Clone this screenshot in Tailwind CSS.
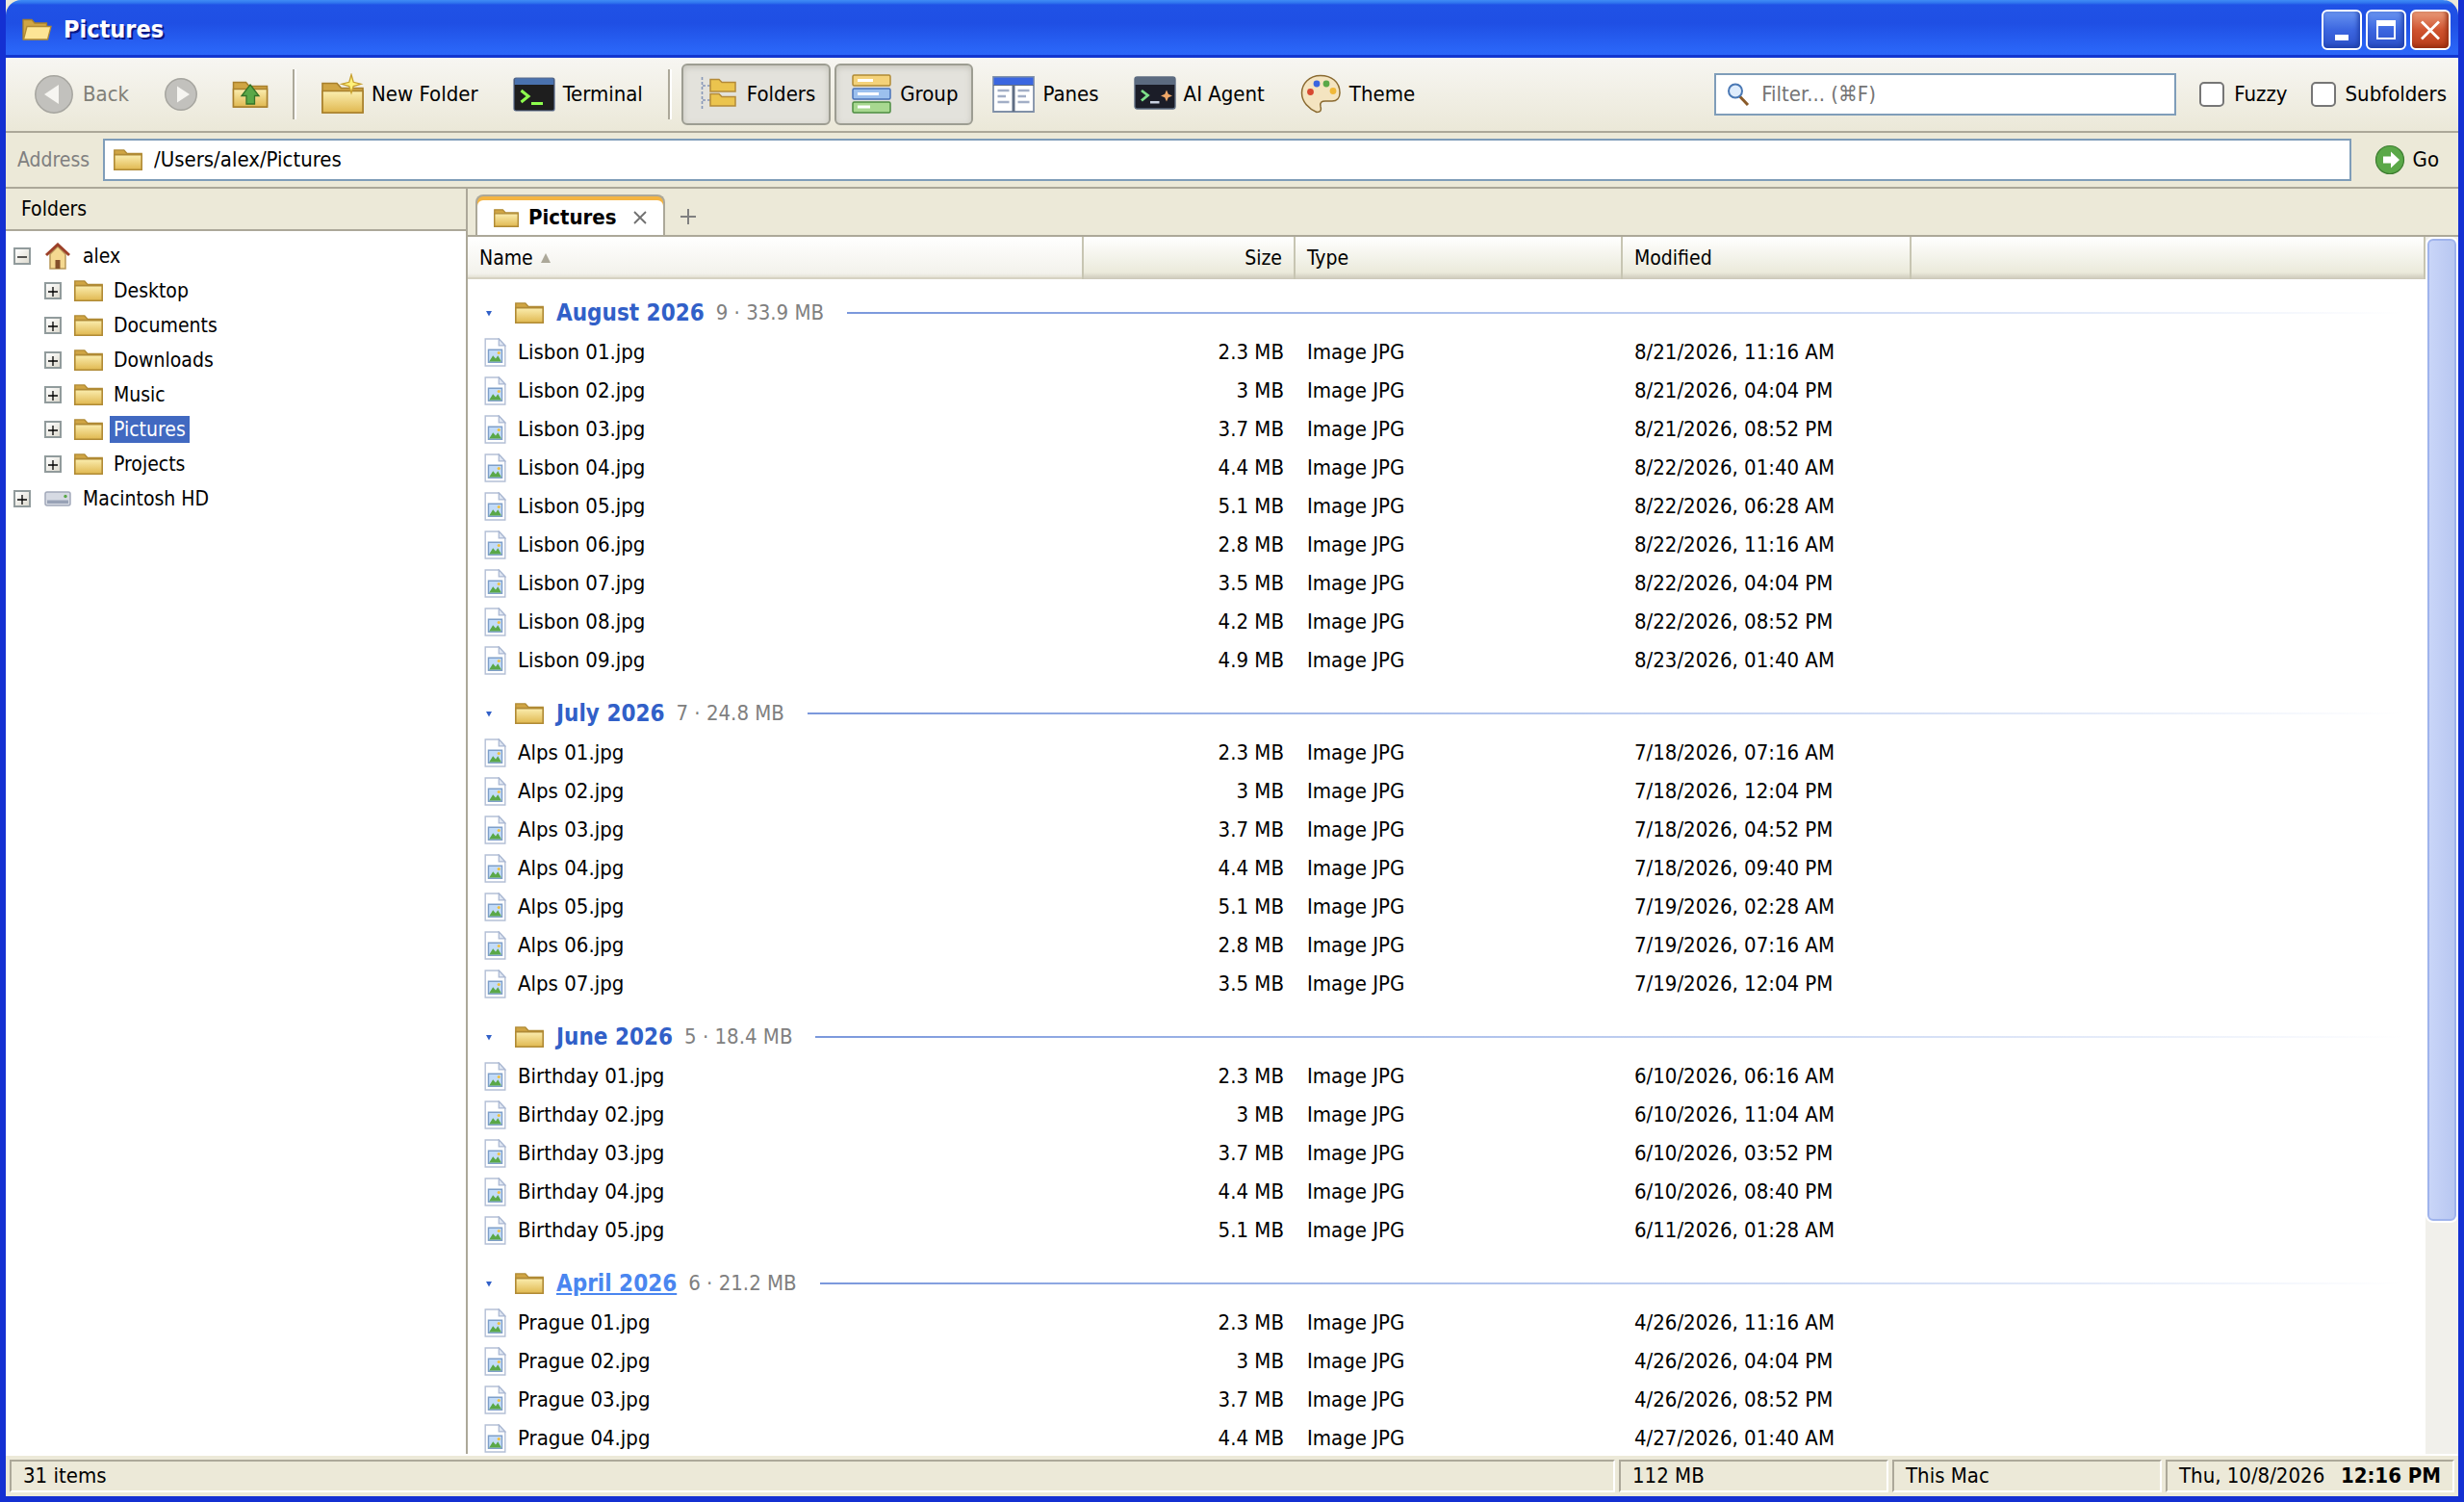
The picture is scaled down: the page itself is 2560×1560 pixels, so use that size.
<!DOCTYPE html>
<html lang="en">

<head>
    <meta charset="UTF-8">
    <meta name="viewport" content="width=device-width, initial-scale=1.0">
    <title>Pictures</title>
    <script src="https://cdn.jsdelivr.net/npm/@tailwindcss/browser@4"></script>
</head>

<body class="h-screen overflow-hidden font-['DejaVu_Sans_Condensed','DejaVu_Sans',sans-serif] text-[22px] leading-7 text-black">
    <!-- Shared icons -->
    <svg class="absolute size-0">
        <defs>
            <linearGradient id="folder-fill" x1="0" y1="0" x2="0" y2="1">
                <stop offset="0" stop-color="#fbeeb0" />
                <stop offset="1" stop-color="#e0b850" />
            </linearGradient>
            <symbol id="folder" viewBox="0 0 30 22">
                <path d="M.8 21V.9h10l3.2 3.6h15.2V21z" fill="#d0a544" stroke="#b08a35" stroke-width="1.4" />
                <path d="M.8 5.6h28.4V21.2H.8z" fill="url(#folder-fill)" stroke="#b08a35" stroke-width="1.6" />
            </symbol>
            <symbol id="image-file" viewBox="0 0 24 32">
                <path d="M1 1h15l7 7.500V31H1z" fill="#fff" stroke="#b4c0d6" stroke-width="1.5" />
                <path d="M16 1v7.500h7z" fill="#dfe6f2" stroke="#a9b7d2" stroke-width="1.300" />
                <path d="M4.500 13h15v14h-15z" fill="#c3dcf8" stroke="#7f9fc9" stroke-width="1.500" />
                <circle cx="16" cy="16.500" r="1.700" fill="#f0c040" />
                <path d="M5.300 26l4.200-6.500 3 3.500 2.500-3.500 3.800 6.500z" fill="#5aa848" />
            </symbol>
        </defs>
    </svg>

    <div class="flex h-full flex-col border-x-6 border-b-6 border-[#1430d2] bg-[#ece9d8]">
        <!-- Title bar -->
        <header class="flex h-[60px] shrink-0 items-center gap-3 rounded-t-[16px] border-b-3 border-[#1236cf] bg-[linear-gradient(to_bottom,#3f8cf5_0px,#2f74ee_3px,#2052e6_5px,#1f4fe4_24px,#2a65f7_52px,#2b66f8_100%)] pt-1 pr-2 pl-4">
            <svg class="h-6 w-8" viewBox="0 0 32 24">
                <path d="M2 21.500V1.500h9l3 3.500h12.500v16.500z" fill="#d0a544" stroke="#a8802c" stroke-width="1.300" />
                <path d="M2.500 22L6 8.500h25L27.500 22z" fill="#fde595" stroke="#b08a35" stroke-width="1.300" />
            </svg>
            <h1 class="flex-1 text-[25px] font-bold text-white [text-shadow:2px_2px_0_#0a1883]">Pictures</h1>
            <div class="flex gap-1">
                <button aria-label="Minimize" class="size-[42px] rounded-md border-2 border-white bg-linear-to-b from-[#6a94f0] via-[#3c66e0] to-[#2c50c8] p-0 shadow-[inset_-2px_-2px_5px_#1f3fa8]">
                    <svg viewBox="0 0 38 38"><path d="M12 24h14v6H12z" fill="#fff" /></svg>
                </button>
                <button aria-label="Maximize" class="size-[42px] rounded-md border-2 border-white bg-linear-to-b from-[#6a94f0] via-[#3c66e0] to-[#2c50c8] p-0 shadow-[inset_-2px_-2px_5px_#1f3fa8]">
                    <svg viewBox="0 0 38 38"><path d="M9 9h20v20H9zM11 15v12h16V15z" fill="#fff" fill-rule="evenodd" /></svg>
                </button>
                <button aria-label="Close" class="size-[42px] rounded-md border-2 border-white bg-linear-to-b from-[#e89a78] via-[#d05430] to-[#b83c18] p-0 shadow-[inset_-2px_-2px_5px_#902c10]">
                    <svg viewBox="0 0 38 38"><path d="M10 10.500l18 18M28 10.500l-18 18" stroke="#fff" stroke-width="2.800" /></svg>
                </button>
            </div>
        </header>

        <!-- Toolbar -->
        <div class="flex h-[78px] shrink-0 items-center gap-1 border-b-2 border-[#aca899] bg-linear-to-b from-[#f7f6f2] to-[#ebe8d8] px-3">
            <button disabled class="flex h-16 items-center gap-2 px-4 text-[#808078]">
                <svg class="size-11" viewBox="0 0 44 44">
                    <circle cx="22" cy="22" r="19.200" fill="#c2c1bd" stroke="#a6a59f" stroke-width="1.500" />
                    <path d="M27 12v20L12 22z" fill="#f6f5f1" />
                </svg>
                Back
            </button>
            <button disabled aria-label="Forward" class="flex h-16 w-17 items-center justify-center">
                <svg class="size-9" viewBox="0 0 36 36">
                    <circle cx="18" cy="18" r="16.200" fill="#c2c1bd" stroke="#a6a59f" stroke-width="1.500" />
                    <path d="M14 9.500v17L27 18z" fill="#f6f5f1" />
                </svg>
            </button>
            <button aria-label="Up" class="flex h-16 w-17 items-center justify-center">
                <svg class="h-7 w-[38px]" viewBox="0 0 38 28">
                    <path d="M1.500 27V1.500h13l3.500 4h18.500V27z" fill="#d0a544" stroke="#a8802c" stroke-width="1.500" />
                    <path d="M1.500 8.500h35V27h-35z" fill="url(#folder-fill)" stroke="#a8802c" stroke-width="1.500" />
                    <path d="M19 4l9 11.500h-4.500V24h-8.500v-8.500h-5z" fill="#5aa848" stroke="#347328" stroke-width="1.300" />
                </svg>
            </button>
            <div class="mx-1.5 h-[52px] w-1 border-r-2 border-l-2 border-r-white border-l-[#aca899]"></div>
            <button class="flex h-16 items-center gap-2 px-4">
                <svg class="size-11" viewBox="0 0 44 44">
                    <path d="M1 41V10.500h15l4.500 5H43V41z" fill="#d0a544" stroke="#a8802c" stroke-width="1.600" />
                    <path d="M1 18.500h42V41H1z" fill="url(#folder-fill)" stroke="#a8802c" stroke-width="1.600" />
                    <path d="M31 1.500l2.200 7.800 7.800 2-7.800 2.200L31 20.500l-2.200-7-7.800-2.200 7.800-2z" fill="#fff27a" stroke="#c8a030" stroke-width="1.300" />
                </svg>
                New Folder
            </button>
            <button class="flex h-16 items-center gap-2 px-4">
                <svg class="size-11" viewBox="0 0 44 44">
                    <rect x="1" y="5" width="42" height="34" rx="2" fill="#1e1e1e" />
                    <path d="M1.500 12V7q0-2 2-2h37q2 0 2 2v5z" fill="#4a72ae" />
                    <rect x="1" y="5" width="42" height="34" rx="2" fill="none" stroke="#56688a" stroke-width="1.200" />
                    <path d="M8.500 18l7.500 6-7.500 6" fill="none" stroke="#8eff4e" stroke-width="3" />
                    <path d="M19 30h12v3H19z" fill="#8eff4e" />
                </svg>
                Terminal
            </button>
            <div class="mx-1.5 h-[52px] w-1 border-r-2 border-l-2 border-r-white border-l-[#aca899]"></div>
            <button aria-pressed="true" class="flex h-16 items-center gap-2 rounded-md border-2 border-[#9d9d92] bg-[#e3e2dc] px-[14px] shadow-[inset_0_2px_6px_#c4c3ba]">
                <svg class="size-11" viewBox="0 0 44 44">
                    <path d="M5.500 4v33M6 13h8M6 28h8" fill="none" stroke="#8797b8" stroke-width="1.600" stroke-dasharray="3 2" />
                    <path d="M14 19V6.500h9l3 3h14V19zM14 34V21.500h9l3 3h14V34z" fill="#ebc44e" stroke="#b48a38" stroke-width="1.500" />
                </svg>
                Folders
            </button>
            <button aria-pressed="true" class="flex h-16 items-center gap-2 rounded-md border-2 border-[#9d9d92] bg-[#e3e2dc] px-[14px] shadow-[inset_0_2px_6px_#c4c3ba]">
                <svg class="size-11" viewBox="0 0 44 44">
                    <rect x="3" y="2" width="39" height="11" rx="1.500" fill="#f4d27a" stroke="#b08a35" stroke-width="1.500" />
                    <rect x="3" y="16" width="39" height="11" rx="1.500" fill="#9cc0ee" stroke="#4872b8" stroke-width="1.500" />
                    <rect x="3" y="30" width="39" height="11" rx="1.500" fill="#a8d890" stroke="#4c8c40" stroke-width="1.500" />
                    <path d="M8 6h16v3H8zM8 20h22v3H8zM8 33.500h13v3H8z" fill="#fff" />
                </svg>
                Group
            </button>
            <button class="flex h-16 items-center gap-2 px-4">
                <svg class="size-11" viewBox="0 0 44 44">
                    <path d="M1 4h42v36H1z" fill="#fff" stroke="#8090a8" stroke-width="1.800" />
                    <path d="M1.500 4.500h41V12h-41z" fill="#3a66e0" />
                    <path d="M22 12v28" stroke="#606e84" stroke-width="3" />
                    <path d="M1 12.500h42" stroke="#606e84" />
                    <path d="M5.500 18h12M5.500 24h8.500M5.500 30h12M26.500 18h12M26.500 24h8.500M26.500 30h12" stroke="#a2aec6" stroke-width="2.500" />
                </svg>
                Panes
            </button>
            <button class="flex h-16 items-center gap-2 px-4">
                <svg class="size-11" viewBox="0 0 44 44">
                    <rect x="1" y="4" width="42" height="33" rx="2.500" fill="#1b1d28" />
                    <path d="M1 12V6.500Q1 4 3.500 4h37Q43 4 43 6.500V12z" fill="#5c6b80" />
                    <rect x="1" y="4" width="42" height="33" rx="2.500" fill="none" stroke="#5c6b80" stroke-width="1.400" />
                    <path d="M8 18l6.500 5L8 28.500" fill="none" stroke="#7ee08a" stroke-width="2.800" />
                    <path d="M17 29h9.500v2.500H17z" fill="#c8d0e0" />
                    <path d="M34 17.500l1.800 4.200 4.200 1.800-4.200 1.800L34 29.500l-1.800-4.200L28 23.500l4.200-1.800z" fill="#f0a868" />
                </svg>
                AI Agent
            </button>
            <button class="flex h-16 items-center gap-2 px-4">
                <svg class="size-11" viewBox="0 0 44 44">
                    <path d="M22 2.500C10 2.500 2.500 11 2.500 20.500S10 37 18 40.500c4.500 0 5-2.500 4-6-1-4 1-5.500 5-5.500h7c5 0 8-3.500 8-8.500C42 8.500 33 2.500 22 2.500z" fill="#f4e4c0" stroke="#8a6a30" stroke-width="1.500" />
                    <circle cx="18" cy="11" r="3.400" fill="#3a66e0" />
                    <circle cx="28" cy="11" r="3.400" fill="#5aa848" />
                    <circle cx="11.500" cy="19.500" r="3.400" fill="#d84830" />
                    <circle cx="35" cy="18.500" r="3.400" fill="#f0b838" />
                </svg>
                Theme
            </button>

            <div class="ml-auto flex items-center">
                <label class="mr-6 flex h-11 w-[480px] items-center gap-3 border-2 border-[#7f9db9] bg-white pr-2 pl-[11px]">
                    <svg class="size-6 shrink-0" viewBox="0 0 24 24">
                        <path d="M13 13.500l9 9.500" stroke="#8a5a28" stroke-width="3" />
                        <circle cx="9" cy="8.500" r="7" fill="#deecfc" stroke="#4a78b4" stroke-width="2" />
                    </svg>
                    <input type="text" aria-label="Filter" placeholder="Filter... (⌘F)" class="min-w-0 flex-1 outline-none placeholder:text-[#757575]">
                </label>
                <input id="fuzzy" type="checkbox" class="size-[26px] appearance-none rounded-[5px] border-2 border-[#767676] bg-white">
                <label for="fuzzy" class="mr-6 ml-[10px]">Fuzzy</label>
                <input id="subfolders" type="checkbox" class="size-[26px] appearance-none rounded-[5px] border-2 border-[#767676] bg-white">
                <label for="subfolders" class="ml-[10px]">Subfolders</label>
            </div>
        </div>

        <!-- Address bar -->
        <div class="flex h-[58px] shrink-0 items-center border-b-2 border-[#aca899] pr-5 pl-3">
            <label for="address" class="w-[89px] text-[21px] text-[#808080]">Address</label>
            <div class="flex h-11 flex-1 items-center gap-3 border-2 border-[#7f9db9] bg-white px-[9px]">
                <svg class="h-[22px] w-[30px]"><use href="#folder" /></svg>
                <input id="address" type="text" value="/Users/alex/Pictures" class="min-w-0 flex-1 outline-none">
            </div>
            <button class="ml-6 flex items-center gap-2">
                <svg class="size-8" viewBox="0 0 32 32">
                    <circle cx="16" cy="16" r="14.500" fill="#5aa848" stroke="#3c7c30" stroke-width="1.200" />
                    <path d="M9 12.500h8V7.500l9 8.500-9 8.500v-5H9z" fill="#fff" />
                </svg>
                Go
            </button>
        </div>

        <!-- Main area -->
        <main class="flex min-h-0 flex-1 border-b-2 border-white">
            <aside class="flex w-[480px] shrink-0 flex-col border-r-2 border-[#aca899] bg-white text-[21px]">
                <h2 class="flex h-11 items-center border-b-2 border-[#aca899] bg-[#ece9d8] px-4">Folders</h2>
                <ul id="folder-tree" class="py-2">
                    <!-- Tree rows are injected here -->
                </ul>
            </aside>

            <section class="flex min-w-0 flex-1 flex-col">
                <!-- Tabs -->
                <div class="flex h-[50px] shrink-0 items-end border-b-2 border-[#aca899] px-2">
                    <div class="h-[42px] overflow-hidden rounded-t-lg border-2 border-b-0 border-[#aca899] bg-[#f4b441] pt-1">
                        <div class="flex h-full items-center rounded-t-md bg-white pr-4 pl-[17px]">
                            <svg class="h-[19px] w-[26px]"><use href="#folder" /></svg>
                            <button class="ml-[10px] font-bold">Pictures</button>
                            <button aria-label="Close tab" class="ml-4">
                                <svg class="size-4" viewBox="0 0 16 16"><path d="M2 2l12 12M14 2L2 14" stroke="#707070" stroke-width="1.800" /></svg>
                            </button>
                        </div>
                    </div>
                    <button aria-label="New tab" class="mb-[11px] ml-4">
                        <svg class="size-4" viewBox="0 0 16 16"><path d="M0 8h16M8 0v16" stroke="#808080" stroke-width="2" /></svg>
                    </button>
                </div>

                <div class="flex min-h-0 flex-1 bg-white">
                    <div class="min-w-0 flex-1 overflow-hidden">
                        <table class="w-full table-fixed border-separate border-spacing-0">
                            <colgroup>
                                <col class="w-[640px]">
                                <col class="w-[220px]">
                                <col class="w-[340px]">
                                <col class="w-[300px]">
                                <col>
                            </colgroup>
                            <thead>
                                <tr class="h-11 text-left text-[21px]">
                                    <th class="border-r-2 border-[#c7c5b2] bg-[linear-gradient(to_bottom,#ffffff,#f3f2ec_38px,#e4e1d4_42px,#d6d2c2_42px,#d6d2c2)] px-3 font-normal">
                                        <span class="flex items-center gap-2">Name
                                            <svg class="size-[10px]" viewBox="0 0 10 10"><path d="M5 0l5 10H0z" fill="#aca899" /></svg>
                                        </span>
                                    </th>
                                    <th class="border-r-2 border-[#c7c5b2] bg-[linear-gradient(to_bottom,#ffffff,#ebeadb_37px,#cbc7b8)] px-3 text-right font-normal">Size</th>
                                    <th class="border-r-2 border-[#c7c5b2] bg-[linear-gradient(to_bottom,#ffffff,#ebeadb_37px,#cbc7b8)] px-3 font-normal">Type</th>
                                    <th class="border-r-2 border-[#c7c5b2] bg-[linear-gradient(to_bottom,#ffffff,#ebeadb_37px,#cbc7b8)] px-3 font-normal">Modified</th>
                                    <td class="border-r-2 border-[#c7c5b2] bg-[linear-gradient(to_bottom,#ffffff,#ebeadb_37px,#cbc7b8)]"></td>
                                </tr>
                            </thead>
                            <tbody id="file-rows">
                                <!-- Groups and files are injected here -->
                            </tbody>
                        </table>
                    </div>

                    <!-- Scrollbar -->
                    <div class="w-[34px] bg-[#f1f0eb]">
                        <div class="h-[81%] rounded-lg border-2 border-white bg-white">
                            <div class="h-full rounded-md border-2 border-[#9fb3ec] bg-linear-to-r from-[#c9d5f8] to-[#b8c7f1]"></div>
                        </div>
                    </div>
                </div>
            </section>
        </main>

        <!-- Status bar -->
        <footer class="flex h-[42px] shrink-0 gap-1 p-1">
            <div class="flex flex-1 items-center border-2 border-t-[#aca899] border-r-white border-b-white border-l-[#aca899] px-3">31 items</div>
            <div class="flex w-[280px] items-center border-2 border-t-[#aca899] border-r-white border-b-white border-l-[#aca899] px-3">112 MB</div>
            <div class="flex w-[280px] items-center border-2 border-t-[#aca899] border-r-white border-b-white border-l-[#aca899] px-3">This Mac</div>
            <div class="flex w-[300px] items-center justify-between border-2 border-t-[#aca899] border-r-white border-b-white border-l-[#aca899] px-3">
                <span>Thu, 10/8/2026</span>
                <span class="font-bold">12:16 PM</span>
            </div>
        </footer>
    </div>

    <script>
        const folderIcon = `<svg class="h-[22px] w-[30px]"><use href="#folder" /></svg>`;
        const homeIcon = `
            <svg class="size-7" viewBox="0 0 28 28">
                <path d="M6 12l8-8 8 8v15H6z" fill="#f4d890" stroke="#b89858" stroke-width="1.500" />
                <path d="M11.500 18h5v9h-5z" fill="#84502a" />
                <path d="M2 13L14 2l12 11" fill="none" stroke="#9c4028" stroke-width="3" />
            </svg>`;
        const driveIcon = `
            <svg class="h-4 w-7" viewBox="0 0 28 16">
                <rect x="1" y="1" width="26" height="14" rx="2" fill="#d6dae3" stroke="#a2a9ba" stroke-width="1.500" />
                <path d="M3 9.500h22v3.500H3z" fill="#98a2b6" />
                <circle cx="22" cy="5.500" r="1.700" fill="#5aa848" />
            </svg>`;

        const tree = [
            { name: "alex", icon: homeIcon, open: true },
            { name: "Desktop", child: true },
            { name: "Documents", child: true },
            { name: "Downloads", child: true },
            { name: "Music", child: true },
            { name: "Pictures", child: true, selected: true },
            { name: "Projects", child: true },
            { name: "Macintosh HD", icon: driveIcon }
        ];

        document.getElementById("folder-tree").innerHTML = tree.map(item => `
            <li class="flex h-9 items-center ${item.child ? "pl-10" : "pl-2"}">
                <button aria-label="Toggle ${item.name}" class="size-[18px] border-2 border-[#919b9c] bg-linear-to-br from-white to-[#dedbd0]">
                    <svg viewBox="0 0 14 14"><path d="${item.open ? "M2 8h10" : "M2 8h10M7 3v10"}" stroke="#000" stroke-width="1.300" /></svg>
                </button>
                <span class="ml-3 flex w-8 justify-center">${item.icon || folderIcon}</span>
                <a href="#" class="ml-1.5 px-1 ${item.selected ? "bg-[#4169c1] text-white" : ""}">${item.name}</a>
            </li>`).join("");

        const sizes = ["2.3 MB", "3 MB", "3.7 MB", "4.4 MB", "5.1 MB", "2.8 MB", "3.5 MB", "4.2 MB", "4.9 MB"];
        const groups = [
            {
                title: "August 2026", info: "9 · 33.9 MB", prefix: "Lisbon",
                dates: ["8/21/2026, 11:16 AM", "8/21/2026, 04:04 PM", "8/21/2026, 08:52 PM", "8/22/2026, 01:40 AM", "8/22/2026, 06:28 AM", "8/22/2026, 11:16 AM", "8/22/2026, 04:04 PM", "8/22/2026, 08:52 PM", "8/23/2026, 01:40 AM"]
            },
            {
                title: "July 2026", info: "7 · 24.8 MB", prefix: "Alps",
                dates: ["7/18/2026, 07:16 AM", "7/18/2026, 12:04 PM", "7/18/2026, 04:52 PM", "7/18/2026, 09:40 PM", "7/19/2026, 02:28 AM", "7/19/2026, 07:16 AM", "7/19/2026, 12:04 PM"]
            },
            {
                title: "June 2026", info: "5 · 18.4 MB", prefix: "Birthday",
                dates: ["6/10/2026, 06:16 AM", "6/10/2026, 11:04 AM", "6/10/2026, 03:52 PM", "6/10/2026, 08:40 PM", "6/11/2026, 01:28 AM"]
            },
            {
                title: "April 2026", info: "6 · 21.2 MB", prefix: "Prague", hover: true,
                dates: ["4/26/2026, 11:16 AM", "4/26/2026, 04:04 PM", "4/26/2026, 08:52 PM", "4/27/2026, 01:40 AM"]
            }
        ];

        document.getElementById("file-rows").innerHTML = groups.map(group => `
            <tr class="h-14">
                <th colspan="5" class="pt-[14px] pr-6 pl-4 font-normal">
                    <div class="flex items-center">
                        <svg class="h-2 w-3" viewBox="0 0 12 8"><path d="M3 2h6L6 7.500z" fill="#3160c8" /></svg>
                        <span class="ml-5 flex w-8 justify-center">${folderIcon}</span>
                        <a href="#" class="ml-3 text-[24px] font-bold ${group.hover ? "text-[#4a86f0] underline" : "text-[#3160c8]"}">${group.title}</a>
                        <span class="ml-3 text-[#808080]">${group.info}</span>
                        <span class="ml-6 h-0.5 flex-1 bg-linear-to-r from-[#7b98dc] to-white"></span>
                    </div>
                </th>
            </tr>
            ${group.dates.map((date, i) => `
            <tr class="h-10">
                <td class="px-3">
                    <div class="flex items-center gap-2">
                        <span class="flex w-8 justify-center"><svg class="h-[30px] w-[23px]"><use href="#image-file" /></svg></span>
                        ${group.prefix} 0${i + 1}.jpg
                    </div>
                </td>
                <td class="pr-3 text-right">${sizes[i]}</td>
                <td class="px-3">Image JPG</td>
                <td class="px-3">${date}</td>
                <td></td>
            </tr>`).join("")}`).join("");
    </script>
</body>

</html>
